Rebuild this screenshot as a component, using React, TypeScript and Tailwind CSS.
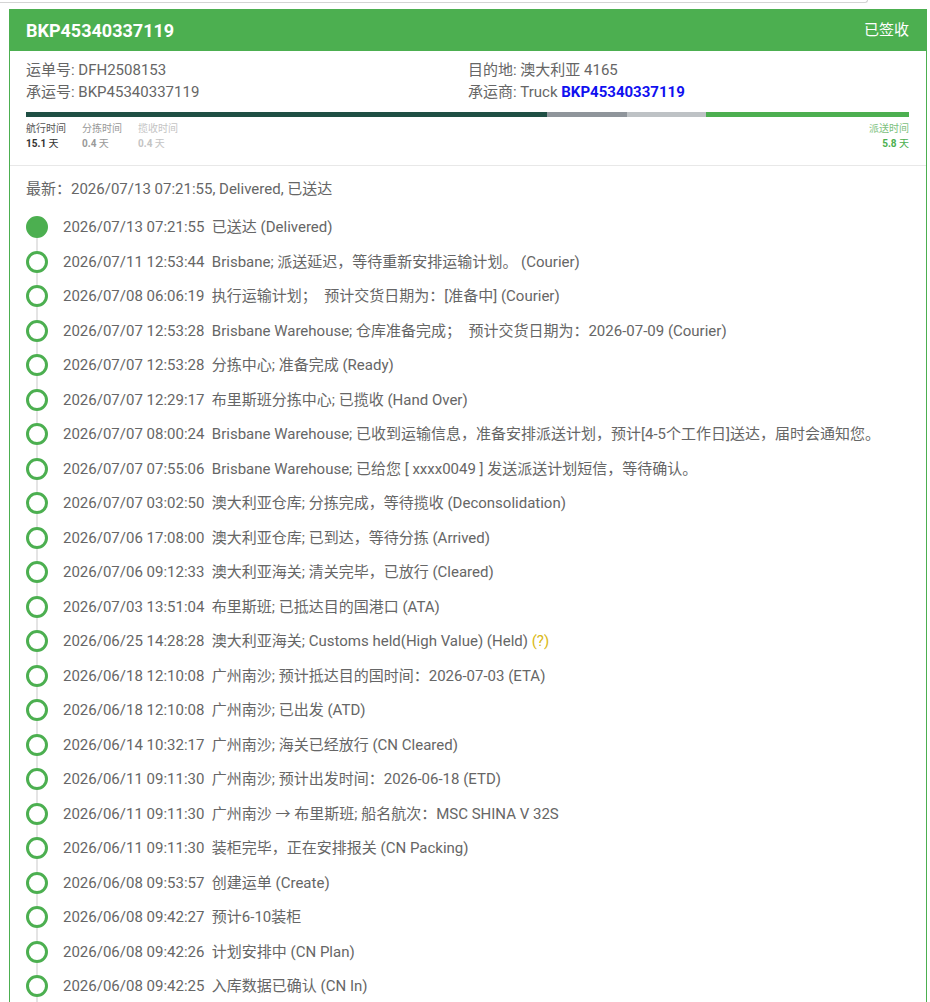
import React from 'react';

type TrackEvent = {
  time: string;
  text: string;
  note?: string;
};

const events: TrackEvent[] = [
  { time: '2026/07/13 07:21:55', text: '已送达 (Delivered)' },
  { time: '2026/07/11 12:53:44', text: 'Brisbane; 派送延迟，等待重新安排运输计划。 (Courier)' },
  { time: '2026/07/08 06:06:19', text: '执行运输计划；  预计交货日期为：[准备中] (Courier)' },
  { time: '2026/07/07 12:53:28', text: 'Brisbane Warehouse; 仓库准备完成；  预计交货日期为：2026-07-09 (Courier)' },
  { time: '2026/07/07 12:53:28', text: '分拣中心; 准备完成 (Ready)' },
  { time: '2026/07/07 12:29:17', text: '布里斯班分拣中心; 已揽收 (Hand Over)' },
  { time: '2026/07/07 08:00:24', text: 'Brisbane Warehouse; 已收到运输信息，准备安排派送计划，预计[4-5个工作日]送达，届时会通知您。' },
  { time: '2026/07/07 07:55:06', text: 'Brisbane Warehouse; 已给您 [ xxxx0049 ] 发送派送计划短信，等待确认。' },
  { time: '2026/07/07 03:02:50', text: '澳大利亚仓库; 分拣完成，等待揽收 (Deconsolidation)' },
  { time: '2026/07/06 17:08:00', text: '澳大利亚仓库; 已到达，等待分拣 (Arrived)' },
  { time: '2026/07/06 09:12:33', text: '澳大利亚海关; 清关完毕，已放行 (Cleared)' },
  { time: '2026/07/03 13:51:04', text: '布里斯班; 已抵达目的国港口 (ATA)' },
  { time: '2026/06/25 14:28:28', text: '澳大利亚海关; Customs held(High Value) (Held)', note: '(?)' },
  { time: '2026/06/18 12:10:08', text: '广州南沙; 预计抵达目的国时间：2026-07-03 (ETA)' },
  { time: '2026/06/18 12:10:08', text: '广州南沙; 已出发 (ATD)' },
  { time: '2026/06/14 10:32:17', text: '广州南沙; 海关已经放行 (CN Cleared)' },
  { time: '2026/06/11 09:11:30', text: '广州南沙; 预计出发时间：2026-06-18 (ETD)' },
  { time: '2026/06/11 09:11:30', text: '广州南沙 → 布里斯班; 船名航次：MSC SHINA V 32S' },
  { time: '2026/06/11 09:11:30', text: '装柜完毕，正在安排报关 (CN Packing)' },
  { time: '2026/06/08 09:53:57', text: '创建运单 (Create)' },
  { time: '2026/06/08 09:42:27', text: '预计6-10装柜' },
  { time: '2026/06/08 09:42:26', text: '计划安排中 (CN Plan)' },
  { time: '2026/06/08 09:42:25', text: '入库数据已确认 (CN In)' },
];

const TimelineRow: React.FC<{ item: TrackEvent; first: boolean; last: boolean }> = ({ item, first, last }) => (
  <div className="flex h-[34.5px] items-stretch">
    <div className="flex w-[22px] flex-col items-center">
      <div className={`w-[2px] flex-1 ${first ? 'bg-transparent' : 'bg-[#e4e4e4]'}`} />
      <div
        className={`h-[22px] w-[22px] shrink-0 rounded-full border-[3px] border-[#4caf50] ${
          first ? 'bg-[#4caf50]' : 'bg-white'
        }`}
      />
      <div className={`w-[2px] flex-1 ${last && false ? 'bg-transparent' : 'bg-[#e4e4e4]'}`} />
    </div>
    <div className="ml-[15px] flex items-center whitespace-pre text-[15px] text-[#666]">
      {item.time}  {item.text}
      {item.note && <span className="text-[#d9b814]"> {item.note}</span>}
    </div>
  </div>
);

export default function App() {
  return (
    <div
      className="min-h-[1002px] bg-white"
      style={{ fontFamily: 'Roboto, "Noto Sans CJK SC", sans-serif' }}
    >
      {/* bottom edge of the panel above */}
      <div className="h-[3px] w-[868px] rounded-br-[12px] border-r border-b border-[#d4d4d4]" />

      <div className="mt-[6px] ml-[9px] w-[918px] border-x border-[#4caf50]">
        <div className="flex h-[42px] items-center justify-between bg-[#4caf50] pr-[17px] pl-[16px] text-white">
          <span className="text-[18px] font-bold">BKP45340337119</span>
          <span className="text-[15px]">已签收</span>
        </div>

        <div className="border-b border-[#e8e8e8] px-[16px] pt-[8px] pb-[14px]">
          <div className="grid grid-cols-[442px_1fr] text-[15px] leading-[22px] text-[#666]">
            <div>运单号: DFH2508153</div>
            <div>目的地: 澳大利亚 4165</div>
            <div>承运号: BKP45340337119</div>
            <div>
              承运商: Truck <span className="font-bold text-[#1010f0]">BKP45340337119</span>
            </div>
          </div>

          <div className="mt-[9px] mr-[1px] grid h-[5px] grid-cols-[521fr_80fr_79fr_203fr]">
            <div className="bg-[#1f4f44]" />
            <div className="bg-[#8f959b]" />
            <div className="bg-[#bec2c5]" />
            <div className="bg-[#4caf50]" />
          </div>

          <div className="mt-[4px] mr-[1px] flex justify-between text-[10px] leading-[15px]">
            <div className="flex gap-[16px]">
              <div className="w-[40px]">
                <div className="text-[#555]">航行时间</div>
                <div className="text-[#333]"><b>15.1</b> 天</div>
              </div>
              <div className="w-[40px]">
                <div className="text-[#999]">分拣时间</div>
                <div className="text-[#999]"><b>0.4</b> 天</div>
              </div>
              <div className="w-[40px]">
                <div className="text-[#c4c4c4]">揽收时间</div>
                <div className="text-[#c4c4c4]"><b>0.4</b> 天</div>
              </div>
            </div>
            <div className="text-right">
              <div className="text-[#7cbf7e]">派送时间</div>
              <div className="text-[#4caf50]"><b>5.8</b> 天</div>
            </div>
          </div>
        </div>

        <div className="px-[16px] pt-[12px] pb-[24px]">
          <div className="text-[15px] leading-[22px] text-[#666]">最新：2026/07/13 07:21:55, Delivered, 已送达</div>
          <div className="mt-[10px]">
            {events.map((e, i) => (
              <TimelineRow key={i} item={e} first={i === 0} last={i === events.length - 1} />
            ))}
          </div>
        </div>
      </div>
    </div>
  );
}
